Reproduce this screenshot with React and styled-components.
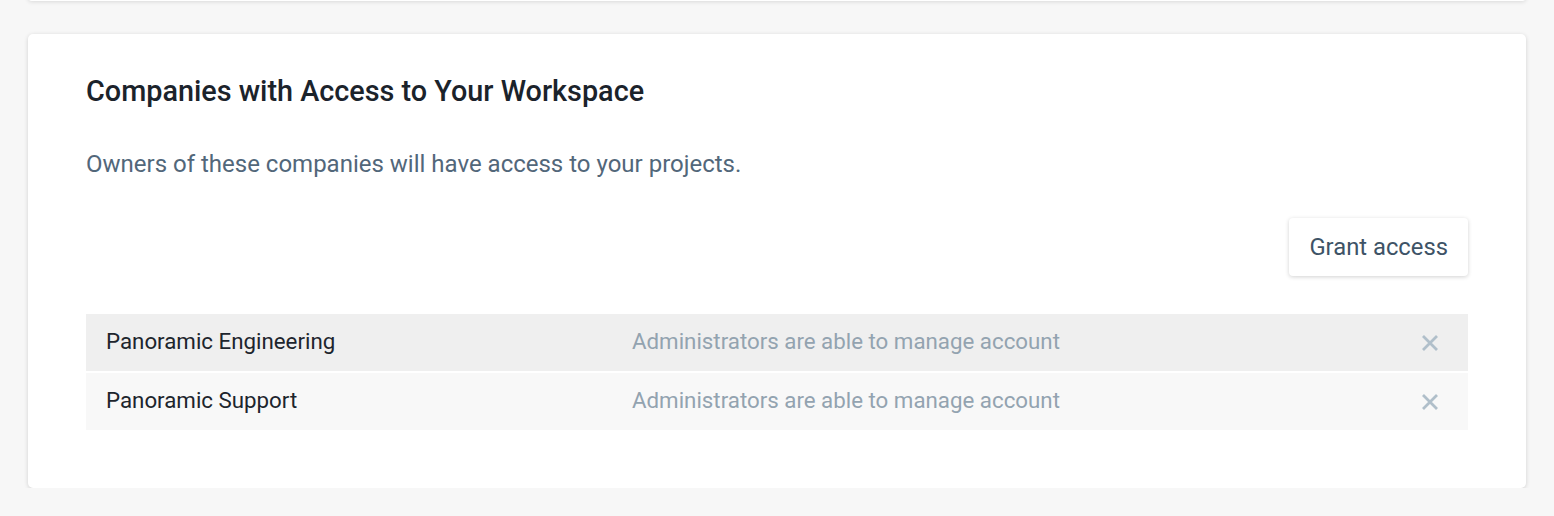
import React from 'react'
import styled, { createGlobalStyle } from 'styled-components'

const GlobalStyle = createGlobalStyle`
  body {
    margin: 0;
    background: #f7f7f7;
    font-family: Roboto, "Liberation Sans", sans-serif;
  }
`

const Page = styled.div`
  padding: 0 28px;
  display: flex;
  flex-direction: column;
  gap: 33px;
`

const PrevCard = styled.div`
  height: 40px;
  margin-top: -39px;
  background: #fff;
  border-radius: 4px;
  box-shadow: 0 1px 4px rgba(0, 0, 0, 0.12);
`

const Card = styled.section`
  background: #fff;
  border-radius: 5px;
  box-shadow: 0 1px 4px rgba(0, 0, 0, 0.16);
  padding: 40px 58px 58px;
  display: flex;
  flex-direction: column;
`

const Title = styled.h2`
  margin: 0;
  font-size: 28.8px;
  font-weight: 500;
  color: #1b232b;
  line-height: 34px;
`

const Description = styled.p`
  margin: 41px 0 0;
  font-size: 24px;
  color: #52677a;
  line-height: 30px;
`

const Actions = styled.div`
  display: flex;
  justify-content: flex-end;
  margin-top: 39px;
`

const Button = styled.button`
  height: 58px;
  padding: 0 20px;
  border: none;
  border-radius: 4px;
  background: #fff;
  box-shadow: 0 1px 4px rgba(0, 0, 0, 0.18);
  font-family: inherit;
  font-size: 23.8px;
  color: #3e5366;
  cursor: pointer;
`

const List = styled.div`
  margin-top: 38px;
  display: flex;
  flex-direction: column;
  gap: 2px;
`

const Row = styled.div`
  box-sizing: border-box;
  display: grid;
  grid-template-columns: 526px 1fr 60px;
  align-items: center;
  height: 57px;
  padding: 0 29px 3px 20px;
  background: ${p => (p.$shade ? '#efefef' : '#f8f8f8')};
  font-size: 22.3px;
`

const Name = styled.span`
  color: #1d252d;
`

const Role = styled.span`
  color: #93a3b0;
`

const Remove = styled.button`
  border: none;
  background: none;
  padding: 3px 0 0;
  display: flex;
  align-items: center;
  justify-content: flex-end;
  cursor: pointer;
`

const CloseIcon = () => (
  <svg width="18" height="18" viewBox="0 0 18 18">
    <path d="M2 2L16 16M16 2L2 16" stroke="#b0bfca" strokeWidth="2.8" strokeLinecap="butt" />
  </svg>
)

const companies = [
  { name: 'Panoramic Engineering', role: 'Administrators are able to manage account' },
  { name: 'Panoramic Support', role: 'Administrators are able to manage account' },
]

const App = () => {
  return (
    <>
      <GlobalStyle />
      <Page>
        <PrevCard />
        <Card>
          <Title>Companies with Access to Your Workspace</Title>
          <Description>Owners of these companies will have access to your projects.</Description>
          <Actions>
            <Button>Grant access</Button>
          </Actions>
          <List>
            {companies.map((c, i) => (
              <Row key={c.name} $shade={i === 0}>
                <Name>{c.name}</Name>
                <Role>{c.role}</Role>
                <Remove aria-label="Remove">
                  <CloseIcon />
                </Remove>
              </Row>
            ))}
          </List>
        </Card>
      </Page>
    </>
  )
}

export default App
